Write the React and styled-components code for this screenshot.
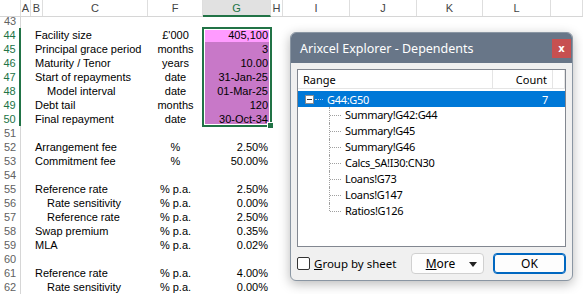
import React from 'react';
import styled, { createGlobalStyle } from 'styled-components';

const GlobalStyle = createGlobalStyle`
  html, body {
    margin: 0;
    padding: 0;
    background: #ffffff;
    overflow: hidden;
  }
  body {
    width: 583px;
    height: 294px;
  }
`;

const COLS = '21px 10px 12px 105px 55px 68px 12px 67px 67px 66px 68px 1fr';

const rows = [
  { n: 43 },
  { n: 44, label: 'Facility size', unit: "£'000", value: '405,100', fill: 'active' },
  { n: 45, label: 'Principal grace period', unit: 'months', value: '3', fill: 'sel' },
  { n: 46, label: 'Maturity / Tenor', unit: 'years', value: '10.00', fill: 'sel' },
  { n: 47, label: 'Start of repayments', unit: 'date', value: '31-Jan-25', fill: 'sel' },
  { n: 48, label: 'Model interval', indent: true, unit: 'date', value: '01-Mar-25', fill: 'sel' },
  { n: 49, label: 'Debt tail', unit: 'months', value: '120', fill: 'sel' },
  { n: 50, label: 'Final repayment', unit: 'date', value: '30-Oct-34', fill: 'sel' },
  { n: 51 },
  { n: 52, label: 'Arrangement fee', unit: '%', value: '2.50%' },
  { n: 53, label: 'Commitment fee', unit: '%', value: '50.00%' },
  { n: 54 },
  { n: 55, label: 'Reference rate', unit: '% p.a.', value: '2.50%' },
  { n: 56, label: 'Rate sensitivity', indent: true, unit: '% p.a.', value: '0.00%' },
  { n: 57, label: 'Reference rate', indent: true, unit: '% p.a.', value: '2.50%' },
  { n: 58, label: 'Swap premium', unit: '% p.a.', value: '0.35%' },
  { n: 59, label: 'MLA', unit: '% p.a.', value: '0.02%' },
  { n: 60 },
  { n: 61, label: 'Reference rate', unit: '% p.a.', value: '4.00%' },
  { n: 62, label: 'Rate sensitivity', indent: true, unit: '% p.a.', value: '0.00%' },
];

const headers = ['', 'A', 'B', 'C', 'F', 'G', 'H', 'I', 'J', 'K', 'L', ''];

const dependents = [
  'Summary!G42:G44',
  'Summary!G45',
  'Summary!G46',
  'Calcs_SA!I30:CN30',
  'Loans!G73',
  'Loans!G147',
  'Ratios!G126',
];

export default function App() {
  return (
    <>
      <GlobalStyle />
      <Screen>
        <Sheet>
          <HeaderRow>
            {headers.map((h, i) => (
              <ColHead key={i} $active={h === 'G'}>
                {h}
              </ColHead>
            ))}
          </HeaderRow>
          <Viewport>
            <Rows>
              {rows.map((r) => {
                const selected = r.n >= 44 && r.n <= 50;
                return (
                  <Row key={r.n}>
                    <RowHead $selected={selected}>{r.n}</RowHead>
                    <span />
                    <Label $indent={r.indent}>{r.label}</Label>
                    <Unit>{r.unit}</Unit>
                    <Value $fill={r.fill}>{r.value}</Value>
                  </Row>
                );
              })}
              <Selection>
                <FillHandle />
              </Selection>
            </Rows>
          </Viewport>
        </Sheet>

        <Dialog>
          <TitleBar>
            <Title>Arixcel Explorer - Dependents</Title>
            <CloseButton>x</CloseButton>
          </TitleBar>
          <DialogBody>
            <TreeList>
              <ListHeader>
                <HeadCell>Range</HeadCell>
                <HeadCell $right>Count</HeadCell>
                <HeadCell />
              </ListHeader>
              <RootRow>
                <Expander>
                  <svg width="9" height="9" viewBox="0 0 9 9">
                    <rect x="0.5" y="0.5" width="8" height="8" fill="#ffffff" stroke="#8c8c8c" />
                    <line x1="2" y1="4.5" x2="7" y2="4.5" stroke="#333333" />
                  </svg>
                </Expander>
                <RootDots />
                <RootText>G44:G50</RootText>
                <CountText>7</CountText>
              </RootRow>
              {dependents.map((d, i) => (
                <ChildRow key={d}>
                  <Connector $last={i === dependents.length - 1} />
                  <ChildText>{d}</ChildText>
                </ChildRow>
              ))}
            </TreeList>
            <Footer>
              <CheckLabel>
                <CheckBox />
                <span>
                  <u>G</u>roup by sheet
                </span>
              </CheckLabel>
              <Buttons>
                <Button>
                  <ButtonText>
                    <u>M</u>ore
                  </ButtonText>
                  <Caret>
                    <svg width="8" height="5" viewBox="0 0 8 5">
                      <path d="M0 0 L8 0 L4 5 Z" fill="#222222" />
                    </svg>
                  </Caret>
                </Button>
                <Button $primary>OK</Button>
              </Buttons>
            </Footer>
          </DialogBody>
        </Dialog>
      </Screen>
    </>
  );
}

const Screen = styled.div`
  position: relative;
  width: 583px;
  height: 294px;
  overflow: hidden;
  font-family: 'Liberation Sans', Arial, sans-serif;
  font-size: 11px;
  color: #000000;
`;

const Sheet = styled.div`
  display: flex;
  flex-direction: column;
  height: 100%;
`;

const HeaderRow = styled.div`
  display: grid;
  grid-template-columns: ${COLS};
  height: 17px;
  border-bottom: 1px solid #d6d6d6;
  box-sizing: border-box;
`;

const ColHead = styled.div`
  display: flex;
  align-items: center;
  justify-content: center;
  border-right: 1px solid #dedede;
  box-sizing: border-box;
  font-size: 11px;
  color: ${(p) => (p.$active ? '#217346' : '#444444')};
  background: ${(p) => (p.$active ? '#e1e1e1' : '#ffffff')};
  border-bottom: ${(p) => (p.$active ? '2px solid #217346' : 'none')};
  margin-bottom: ${(p) => (p.$active ? '-1px' : '0')};
`;

const Viewport = styled.div`
  flex: 1;
  overflow: hidden;
`;

const Rows = styled.div`
  position: relative;
  margin-top: -3px;
`;

const Row = styled.div`
  display: grid;
  grid-template-columns: 21px 10px 117px 55px 68px;
  height: 14px;
  line-height: 14px;
`;

const RowHead = styled.div`
  text-align: center;
  font-size: 11px;
  box-sizing: border-box;
  color: ${(p) => (p.$selected ? '#217346' : '#616161')};
  border-right: ${(p) => (p.$selected ? '2px solid #217346' : '1px solid #d6d6d6')};
  background: #ffffff;
`;

const Label = styled.div`
  padding-left: ${(p) => (p.$indent ? '16px' : '4px')};
  white-space: nowrap;
`;

const Unit = styled.div`
  text-align: center;
`;

const Value = styled.div`
  text-align: right;
  padding-right: 3px;
  background: ${(p) =>
    p.$fill === 'active' ? '#ff9bff' : p.$fill === 'sel' ? '#c878c8' : 'transparent'};
`;

const Selection = styled.div`
  position: absolute;
  left: 202px;
  top: 13px;
  width: 70px;
  height: 100px;
  border: 2px solid #217346;
  box-sizing: border-box;
  box-shadow: inset 0 0 0 1px #ffffff;
  pointer-events: none;
`;

const FillHandle = styled.div`
  position: absolute;
  right: -4px;
  bottom: -4px;
  width: 5px;
  height: 5px;
  background: #217346;
  border: 1px solid #ffffff;
`;

const Dialog = styled.div`
  position: absolute;
  left: 290px;
  top: 32px;
  width: 283px;
  height: 249px;
  display: flex;
  flex-direction: column;
  background: #f0f0f0;
  border: 1px solid #8a96a3;
  border-radius: 6px;
  box-sizing: border-box;
  overflow: hidden;
  box-shadow: 0 3px 12px rgba(0, 0, 0, 0.28);
  font-family: 'Noto Sans', 'Open Sans', sans-serif;
`;

const TitleBar = styled.div`
  height: 30px;
  flex: none;
  display: flex;
  align-items: center;
  justify-content: space-between;
  padding: 0 1px 0 9px;
  background: #687688;
`;

const Title = styled.span`
  color: #ffffff;
  font-size: 12.5px;
`;

const CloseButton = styled.div`
  width: 19px;
  height: 19px;
  margin-top: 1px;
  display: flex;
  align-items: center;
  justify-content: center;
  background: #c75050;
  color: #ffffff;
  font-family: 'DejaVu Sans', sans-serif;
  font-weight: bold;
  font-size: 10px;
`;

const DialogBody = styled.div`
  flex: 1;
  display: flex;
  flex-direction: column;
  gap: 6px;
  padding: 6px;
`;

const TreeList = styled.div`
  flex: 1;
  background: #ffffff;
  border: 1px solid #828790;
  font-size: 11px;
  letter-spacing: -0.3px;
  color: #000000;
`;

const ListHeader = styled.div`
  display: grid;
  grid-template-columns: 195px 60px 1fr;
  height: 18px;
  border-bottom: 1px solid #e5e5e5;
  margin-bottom: 2px;
  letter-spacing: 0;
`;

const HeadCell = styled.div`
  display: flex;
  align-items: center;
  justify-content: ${(p) => (p.$right ? 'flex-end' : 'flex-start')};
  padding: 0 5px;
  border-right: 1px solid #e5e5e5;
`;

const RootRow = styled.div`
  display: flex;
  align-items: center;
  height: 16px;
  background: #0078d7;
  color: #ffffff;
  padding-left: 7px;
  padding-right: 17px;
`;

const Expander = styled.span`
  display: flex;
  width: 9px;
  height: 9px;
`;

const RootDots = styled.span`
  width: 8px;
  margin: 0 4px 0 1px;
  border-top: 1px dotted #a8c8ee;
`;

const RootText = styled.span`
  flex: 1;
`;

const CountText = styled.span``;

const ChildRow = styled.div`
  display: flex;
  align-items: stretch;
  height: 16px;
  padding-left: 31px;
`;

const Connector = styled.span`
  position: relative;
  width: 11px;
  margin-right: 4px;
  border-left: 1px dotted #a0a0a0;
  height: ${(p) => (p.$last ? '8px' : '16px')};
  &::after {
    content: '';
    position: absolute;
    left: 0;
    top: 8px;
    width: 11px;
    border-top: 1px dotted #a0a0a0;
  }
`;

const ChildText = styled.span`
  line-height: 16px;
`;

const Footer = styled.div`
  display: flex;
  align-items: center;
  justify-content: space-between;
  height: 21px;
  font-size: 11.5px;
`;

const CheckLabel = styled.label`
  display: flex;
  align-items: center;
  gap: 4px;
  color: #000000;
`;

const CheckBox = styled.span`
  width: 11px;
  height: 11px;
  border: 1px solid #333333;
  border-radius: 2px;
  background: #ffffff;
`;

const Buttons = styled.div`
  display: flex;
  gap: 9px;
`;

const Button = styled.div`
  position: relative;
  width: 73px;
  height: 21px;
  box-sizing: border-box;
  display: flex;
  align-items: center;
  justify-content: center;
  border-radius: 4px;
  background: #fdfdfd;
  border: ${(p) => (p.$primary ? '1px solid #0067c0' : '1px solid #d0d0d0')};
  box-shadow: ${(p) => (p.$primary ? 'inset 0 0 0 1px #0067c0' : 'none')};
  font-size: 12px;
  color: #000000;
`;

const ButtonText = styled.span`
  margin-right: 14px;
`;

const Caret = styled.span`
  position: absolute;
  right: 6px;
  top: 8px;
  display: flex;
`;
